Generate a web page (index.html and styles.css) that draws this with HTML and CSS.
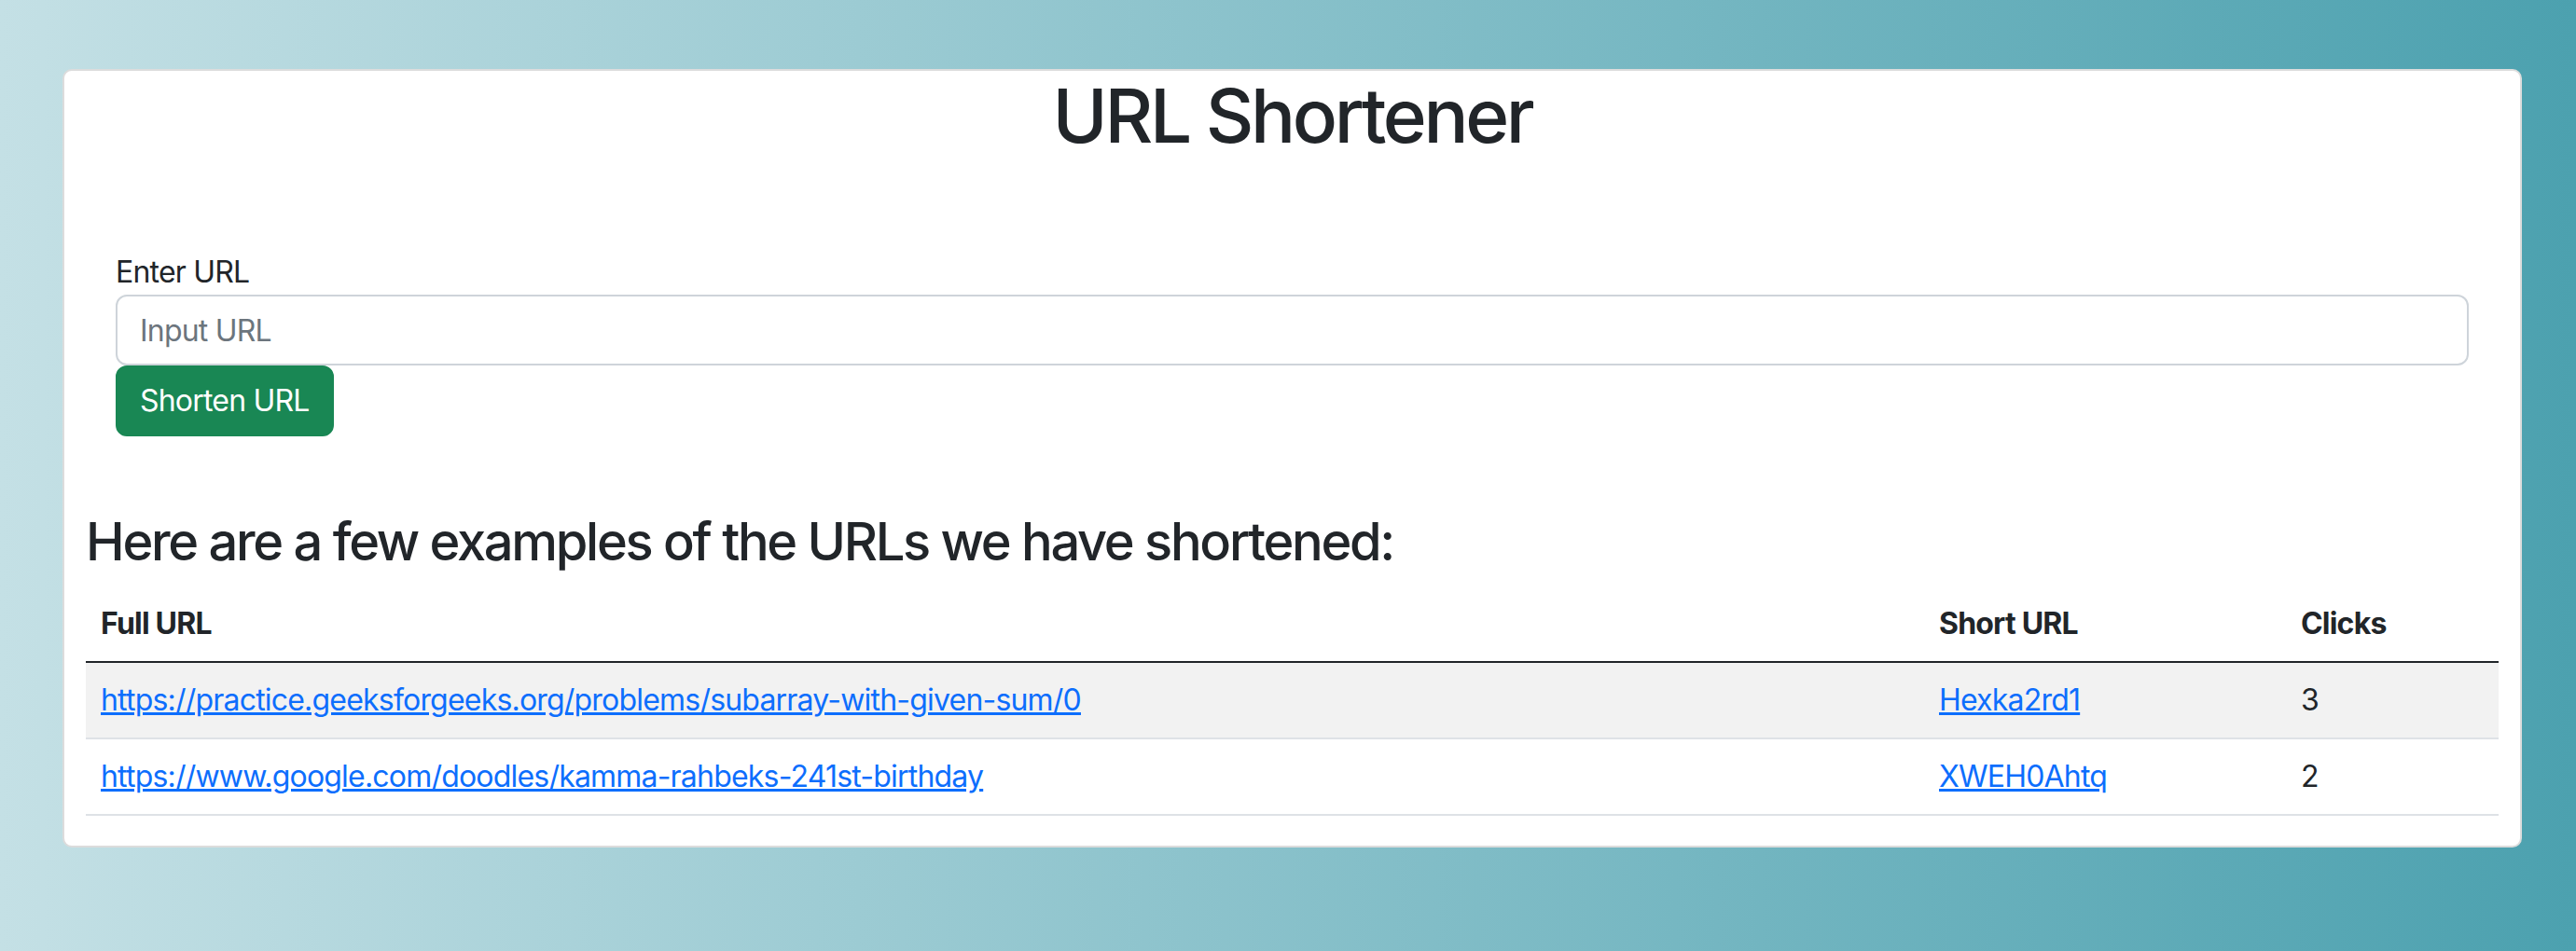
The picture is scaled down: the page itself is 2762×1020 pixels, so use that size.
FILE: index.html
```html
<!DOCTYPE html>
<html lang="en">
<head>
<meta charset="utf-8">
<title>URL Shortener</title>
<link rel="stylesheet" href="styles.css">
</head>
<body>
<div class="page">
  <div class="card">
    <h1 class="title">URL Shortener</h1>
    <form class="shorten-form">
      <label class="form-label" for="url">Enter URL</label>
      <input class="form-control" id="url" type="text" placeholder="Input URL">
      <div><button class="btn-success" type="button">Shorten URL</button></div>
    </form>
    <section class="examples">
      <h3 class="examples-title">Here are a few examples of the URLs we have shortened:</h3>
      <table class="table">
        <colgroup>
          <col class="col-full">
          <col class="col-short">
          <col class="col-clicks">
        </colgroup>
        <thead>
          <tr><th>Full URL</th><th>Short URL</th><th>Clicks</th></tr>
        </thead>
        <tbody>
          <tr class="striped">
            <td><a href="#">https://practice.geeksforgeeks.org/problems/subarray-with-given-sum/0</a></td>
            <td><a href="#">Hexka2rd1</a></td>
            <td>3</td>
          </tr>
          <tr>
            <td><a href="#">https://www.google.com/doodles/kamma-rahbeks-241st-birthday</a></td>
            <td><a href="#">XWEH0Ahtq</a></td>
            <td>2</td>
          </tr>
        </tbody>
      </table>
    </section>
  </div>
</div>
</body>
</html>
```
FILE: styles.css
```css
html, body {
  margin: 0;
  padding: 0;
}
body {
  min-height: 100vh;
  background: linear-gradient(to right, #c4e0e5, #4ca1af);
  font-family: Inter, "Noto Sans", sans-serif;
  color: #212529;
  font-size: 32px;
  line-height: 48px;
  letter-spacing: -0.025em;
}
.page {
  padding: 74px 58px 0 67px;
}
.card {
  background: #fff;
  border: 2px solid #dcdcdc;
  border-radius: 10px;
}
.title {
  margin: 0;
  font-size: 80px;
  line-height: 96px;
  font-weight: 500;
  letter-spacing: -0.042em;
  text-align: center;
}
.shorten-form {
  padding: 96px 55px 0;
}
.form-label {
  display: block;
}
.form-control {
  display: block;
  box-sizing: border-box;
  width: 100%;
  height: 76px;
  margin: 0;
  padding: 12px 24px;
  font-family: inherit;
  font-size: 32px;
  line-height: 48px;
  letter-spacing: -0.025em;
  color: #212529;
  border: 2px solid #ced4da;
  border-radius: 12px;
  background: #fff;
  outline: none;
}
.form-control::placeholder {
  color: #6c757d;
}
.btn-success {
  box-sizing: border-box;
  height: 76px;
  margin: 0;
  padding: 12px 24px;
  font-family: inherit;
  font-size: 32px;
  line-height: 48px;
  letter-spacing: -0.025em;
  color: #fff;
  background: #198754;
  border: 2px solid #198754;
  border-radius: 12px;
}
.examples {
  padding: 80px 23px 0;
}
.examples-title {
  margin: 0 0 14px;
  font-size: 56px;
  line-height: 67px;
  font-weight: 500;
  letter-spacing: -0.041em;
}
.table {
  width: 100%;
  border-collapse: collapse;
  table-layout: fixed;
  margin-bottom: 32px;
}
.col-full { width: 1971px; }
.col-short { width: 388px; }
.col-clicks { width: 228px; }
.table th, .table td {
  padding: 16px;
  text-align: left;
  vertical-align: top;
  white-space: nowrap;
}
.table th {
  font-weight: 700;
  border-bottom: 2px solid #212529;
}
.table td {
  border-bottom: 2px solid #dee2e6;
}
.table tr.striped td {
  background: #f2f2f2;
}
.table a {
  color: #0d6efd;
  text-decoration: underline;
}
```
